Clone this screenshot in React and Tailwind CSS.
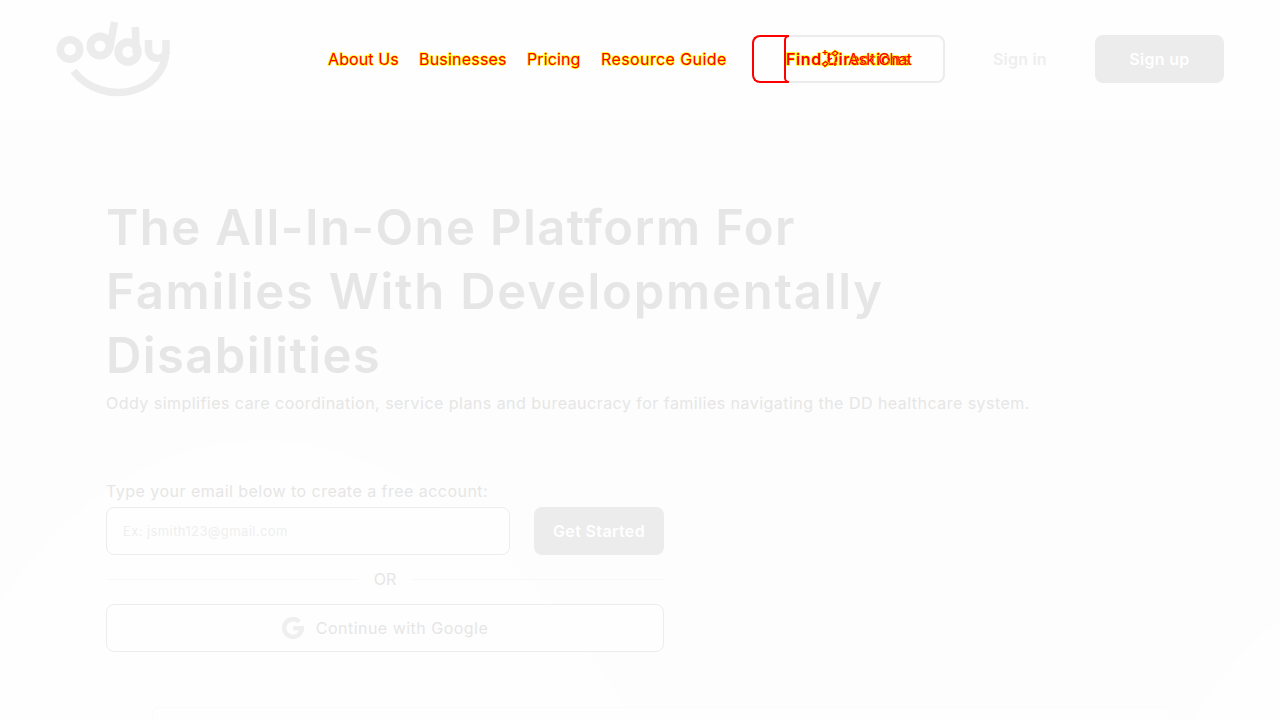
import React from "react";

const highlight = "text-[#ff0000] [-webkit-text-stroke:1.4px_#ffff00] [paint-order:stroke_fill]";

function Logo() {
  return (
    <svg width="116" height="78" viewBox="0 0 116 78" fill="none" stroke="#ececec" className="block shrink-0">
      <circle cx="14" cy="29.5" r="9.7" strokeWidth="7.6" />
      <circle cx="44" cy="26" r="9.5" strokeWidth="8" />
      <path d="M58.500 2L53.500 29" strokeWidth="7.500" />
      <circle cx="72" cy="32" r="9.7" strokeWidth="8" />
      <path d="M79.300 7L80.300 33" strokeWidth="7.500" />
      <path d="M92.500 20v9c0 12 16 12 18 2" strokeWidth="7.500" />
      <path d="M110 20v9c0 46-64 59-92.500 22" strokeWidth="7.500" />
    </svg>
  );
}

function GoogleMark() {
  return (
    <svg width="22" height="22" viewBox="0 0 22 22" fill="none" stroke="#efefef" strokeWidth="4.400" className="block">
      <path d="M17.300 4.800A8.800 8.800 0 1 0 19.800 11.300H11.200" />
    </svg>
  );
}

function Sparkles() {
  return (
    <svg width="20" height="20" viewBox="0 0 20 20" fill="none" className="absolute left-[67px] top-[12px]">
      <g stroke="#ffff00" strokeWidth="2.600">
        <path d="M4 1v5M1.500 3.500h5M14 13v4M12 15h4M1.500 15l3-2.500 2.500 2-3 3zM11 4.500l3-2.500 3 2-3 3z" />
      </g>
      <g stroke="#ff0000" strokeWidth="1.200">
        <path d="M4 1v5M1.500 3.500h5M14 13v4M12 15h4M1.500 15l3-2.500 2.500 2-3 3zM11 4.500l3-2.500 3 2-3 3zM7 8l2 2M8 11l3-2" />
      </g>
    </svg>
  );
}

function Background() {
  return (
    <svg width="1280" height="601" viewBox="0 119 1280 601" className="absolute left-0 top-0">
      <path fill="#fefefe" d="M0 604C60 510 150 441 260 441C400 441 510 550 590 655L635 720H0z" />
      <path fill="#fefefe" d="M1280 620Q1225 665 1192 720H1280z" />
    </svg>
  );
}

export default function App() {
  return (
    <div className="flex h-[720px] w-[1280px] flex-col overflow-hidden bg-[#fdfdfd] font-[Inter,sans-serif] text-base text-[#e6e6e6]">
      <header className="flex h-[119px] shrink-0 items-center bg-[#fefefe] px-14 pb-px">
        <Logo />
        <nav className={"ml-[156px] flex w-[400px] gap-5 whitespace-nowrap " + highlight}>
          <a className="w-[71px] tracking-[0.1px]">About Us</a>
          <a className="w-[88px] tracking-[0.2px]">Businesses</a>
          <a className="w-[54px] tracking-[0.1px]">Pricing</a>
          <a className="w-[127px] tracking-[0.4px]">Resource Guide</a>
        </nav>
        <div className="relative ml-6 h-12 w-[193px] shrink-0 rounded-lg border-2 border-[#ececec]">
          <div className="absolute -left-0.5 -top-0.5 h-12 w-9 rounded-l-lg border-2 border-r-0 border-[#ff0000]" />
          <div className="absolute -top-0.5 left-[30px] h-12 w-[5px] rounded-l-lg border-2 border-r-0 border-[#ff0000]" />
          <span className={"absolute left-8 top-[10px] whitespace-nowrap font-semibold tracking-[0.6px] " + highlight}>Find Directions</span>
          <Sparkles />
          <span className="absolute left-[94px] top-[10px] whitespace-nowrap tracking-[-0.6px] text-[#ff0000] [-webkit-text-stroke:0.7px_#ffff00] [paint-order:stroke_fill]">Ask Chat</span>
        </div>
        <span className="ml-12 w-[54px] whitespace-nowrap font-semibold tracking-[0.2px] text-[#eeeeee]">Sign in</span>
        <button className="ml-12 h-12 w-[129px] rounded-lg bg-[#ececec] font-semibold tracking-[0.3px] text-white">Sign up</button>
      </header>

      <main className="relative flex-1">
        <Background />
        <div className="relative flex flex-col px-[106px] pt-[77px]">
          <h1 className="whitespace-nowrap text-[49px] font-semibold leading-[64px]">
            <span className="block tracking-[1.4px]">The All-In-One Platform For</span>
            <span className="block tracking-[1.77px]">Families With Developmentally</span>
            <span className="block tracking-[1.4px]">Disabilities</span>
          </h1>
          <p className="mt-[3px] whitespace-nowrap leading-6 tracking-[0.47px]">
            Oddy simplifies care coordination, service plans and bureaucracy for families navigating the DD healthcare system.
          </p>

          <form className="mt-16 flex w-[558px] flex-col">
            <label className="whitespace-nowrap leading-6 tracking-[0.47px]">Type your email below to create a free account:</label>
            <div className="mt-1 flex gap-6">
              <div className="flex h-12 w-[404px] items-center rounded-lg border border-[#ededed] bg-[#fefefe] px-4 pt-0.5 text-[13px] tracking-[0.41px] text-[#efefef]">
                Ex: jsmith123@gmail.com
              </div>
              <button type="button" className="h-12 w-[130px] whitespace-nowrap rounded-lg bg-[#ececec] font-semibold tracking-[0.36px] text-white">Get Started</button>
            </div>
            <div className="mt-3 flex h-6 items-center gap-4">
              <div className="h-px flex-1 bg-[#f8f8f8]" />
              <span className="leading-6">OR</span>
              <div className="h-px flex-1 bg-[#f8f8f8]" />
            </div>
            <button type="button" className="mt-[13px] flex h-12 items-center justify-center gap-3 rounded-lg border border-[#ededed] bg-[#fefefe] tracking-[0.48px]">
              <GoogleMark />
              <span>Continue with Google</span>
            </button>
          </form>
        </div>
        <div className="relative ml-[152px] mt-[55px] h-20 w-[1018px] rounded-md border border-[#fbfbfb] bg-[#fefefe]" />
      </main>
    </div>
  );
}
